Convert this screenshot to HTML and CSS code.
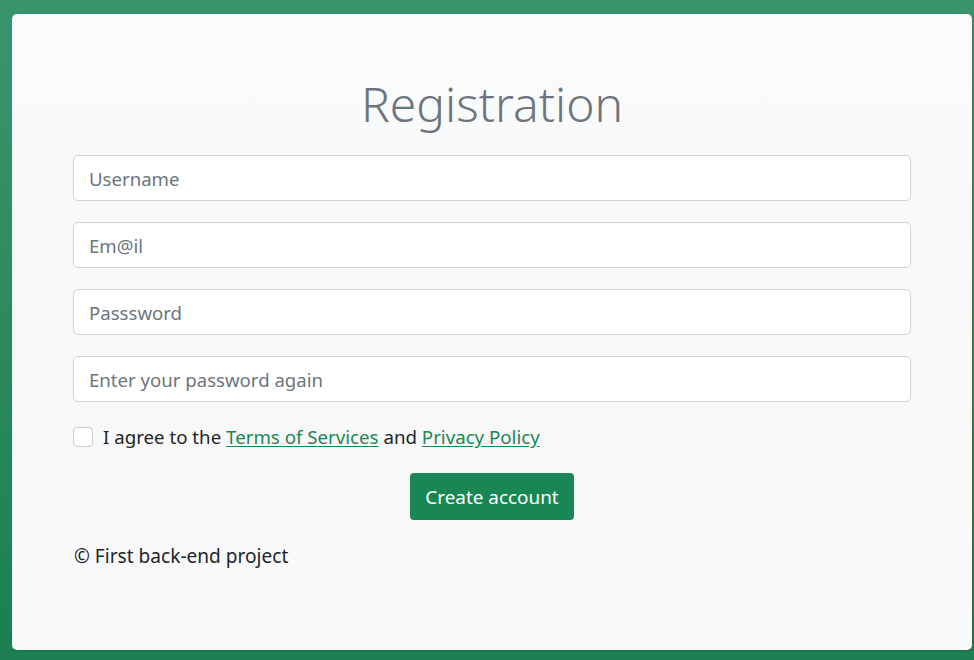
FILE: index.html
```html
<!DOCTYPE html>
<html lang="en">
<head>
<meta charset="utf-8">
<title>Registration</title>
<link rel="stylesheet" href="styles.css">
</head>
<body>
<main class="card">
  <h1 class="title">Registration</h1>
  <form class="form">
    <input class="field" type="text" placeholder="Username">
    <input class="field" type="email" placeholder="Em@il">
    <input class="field" type="password" placeholder="Passsword">
    <input class="field" type="password" placeholder="Enter your password again">
    <label class="agree">
      <span class="box"></span>
      <span>I agree to the <a href="#" class="link">Terms of Services</a> and <a href="#" class="link">Privacy Policy</a></span>
    </label>
    <div class="actions">
      <button type="button" class="btn">Create account</button>
    </div>
  </form>
  <p class="footer">© First back-end project</p>
</main>
</body>
</html>
```
FILE: styles.css
```css
html, body {
  margin: 0;
  height: 100%;
}
body {
  background: linear-gradient(180deg, #3a956d 0%, #1b7f51 100%);
  font-family: "Noto Sans", "Open Sans", sans-serif;
  color: #212529;
  padding: 14px 2px 10px 12px;
  box-sizing: border-box;
}
.card {
  box-sizing: border-box;
  height: 636px;
  background: linear-gradient(180deg, #fafbfc 0%, #f8f8f8 45%, #f8f9fa 100%);
  border-radius: 5px;
  padding: 0 61px;
  display: flex;
  flex-direction: column;
  box-shadow: 1px 1px 2px rgba(0,0,0,0.15);
}
.title {
  margin: 61px 0 0;
  text-align: center;
  font-weight: 300;
  font-size: 48px;
  line-height: 58px;
  color: #6c757d;
}
.form {
  display: flex;
  flex-direction: column;
  margin-top: 22px;
}
.field {
  box-sizing: border-box;
  height: 46px;
  margin: 0 0 21px;
  padding: 0 15px;
  border: 1px solid #ced4da;
  border-radius: 5px;
  background: #fff;
  font-family: inherit;
  font-size: 18.6px;
  color: #212529;
  outline: none;
}
.field::placeholder {
  color: #6c757d;
}
.agree {
  display: flex;
  align-items: center;
  gap: 10px;
  margin-top: 0;
  font-size: 18.7px;
  line-height: 28px;
}
.box {
  width: 18px;
  height: 18px;
  border: 1px solid #c8cdd2;
  border-radius: 4px;
  background: #fff;
  flex: none;
}
.link {
  color: #198754;
  text-decoration: underline;
  text-underline-offset: 2px;
}
.actions {
  display: flex;
  justify-content: center;
  margin-top: 22px;
}
.btn {
  height: 47px;
  width: 164px;
  border: none;
  border-radius: 4px;
  background: #198754;
  color: #fff;
  font-family: inherit;
  font-size: 18.9px;
  cursor: pointer;
}
.footer {
  margin: 22px 0 0 1px;
  font-size: 19.1px;
  line-height: 28px;
}
```
